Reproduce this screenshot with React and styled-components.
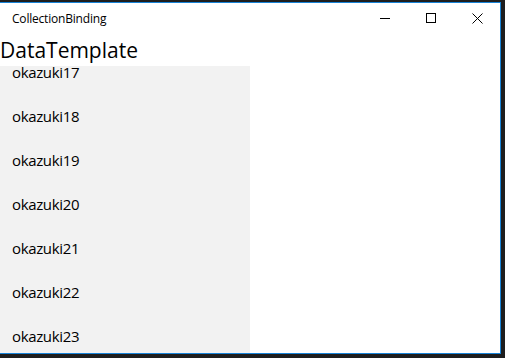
import React, { useLayoutEffect, useRef } from 'react';
import styled, { createGlobalStyle } from 'styled-components';

const GlobalStyle = createGlobalStyle`
  html, body {
    margin: 0;
    padding: 0;
    background: #1e1e1e;
    overflow: hidden;
  }
`

const Desktop = styled.div`
  width: 505px;
  height: 358px;
  box-sizing: border-box;
  padding: 2px 4px 4px 0;
  background: #1e1e1e;
  display: flex;
`

const Window = styled.div`
  flex: 1;
  display: flex;
  flex-direction: column;
  background: #ffffff;
  border: 1px solid #1883d7;
  border-left: none;
  font-family: 'Open Sans', 'Noto Sans', sans-serif;
  color: #000;
  overflow: hidden;
`

const TitleBar = styled.div`
  height: 30px;
  display: flex;
  align-items: center;
  flex-shrink: 0;
`

const Title = styled.span`
  flex: 1;
  padding-left: 12px;
  font-size: 12px;
  letter-spacing: -0.2px;
`

const Controls = styled.div`
  display: flex;
  height: 100%;
`

const ControlButton = styled.div`
  width: 46px;
  height: 100%;
  display: flex;
  align-items: center;
  justify-content: center;
`

const Heading = styled.h1`
  margin: 0;
  height: 33px;
  box-sizing: border-box;
  padding-top: 3px;
  font-size: 21px;
  font-weight: 400;
  line-height: 28px;
  letter-spacing: 0;
  flex-shrink: 0;
  white-space: nowrap;
`

const ListPanel = styled.ul`
  list-style: none;
  margin: 0;
  padding: 0;
  width: 250px;
  flex: 1;
  background: #f2f2f2;
  overflow: hidden;
`

const Item = styled.li`
  height: 44px;
  display: flex;
  align-items: center;
  padding-left: 12px;
  font-size: 15px;
  letter-spacing: -0.35px;
`

const MinimizeIcon = () => (
  <svg width="10" height="10" viewBox="0 0 10 10">
    <line x1="0" y1="5.5" x2="10" y2="5.5" stroke="#000" strokeWidth="1" />
  </svg>
)

const MaximizeIcon = () => (
  <svg width="10" height="10" viewBox="0 0 10 10">
    <rect x="0.5" y="0.5" width="9" height="9" fill="none" stroke="#000" strokeWidth="1" />
  </svg>
)

const CloseIcon = () => (
  <svg width="11" height="11" viewBox="0 0 11 11">
    <path d="M0.5 0.5 L10.5 10.5 M10.5 0.5 L0.5 10.5" stroke="#000" strokeWidth="1" />
  </svg>
)

const people = Array.from({ length: 40 }, (_, i) => 'okazuki' + i)

const App = () => {
  const listRef = useRef(null)

  // the list is scrolled part-way, okazuki17 sits at the top edge
  useLayoutEffect(() => {
    if (listRef.current) listRef.current.scrollTop = 17 * 44 + 16
  }, [])

  return (
    <>
      <GlobalStyle />
      <Desktop>
        <Window>
          <TitleBar>
            <Title>CollectionBinding</Title>
            <Controls>
              <ControlButton><MinimizeIcon /></ControlButton>
              <ControlButton><MaximizeIcon /></ControlButton>
              <ControlButton><CloseIcon /></ControlButton>
            </Controls>
          </TitleBar>
          <Heading>DataTemplate</Heading>
          <ListPanel ref={listRef}>
            {people.map((name) => <Item key={name}>{name}</Item>)}
          </ListPanel>
        </Window>
      </Desktop>
    </>
  )
}

export default App
